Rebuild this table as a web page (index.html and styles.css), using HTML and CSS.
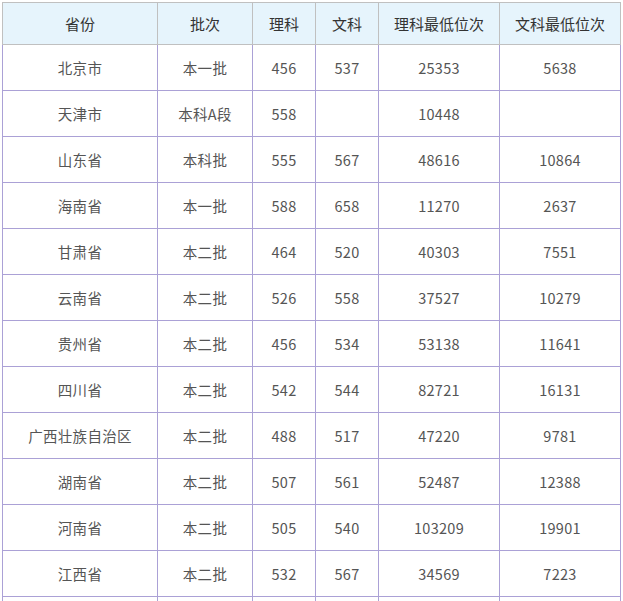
FILE: index.html
```html
<!DOCTYPE html>
<html lang="zh-CN">
<head>
<meta charset="utf-8">
<title>录取分数线</title>
<link rel="stylesheet" href="styles.css">
</head>
<body>
<table class="score-table">
  <colgroup>
    <col class="c-prov"><col class="c-batch"><col class="c-num"><col class="c-num"><col class="c-rank"><col class="c-rank">
  </colgroup>
  <thead>
    <tr><th>省份</th><th>批次</th><th>理科</th><th>文科</th><th>理科最低位次</th><th>文科最低位次</th></tr>
  </thead>
  <tbody>
    <tr><td>北京市</td><td>本一批</td><td>456</td><td>537</td><td>25353</td><td>5638</td></tr>
    <tr><td>天津市</td><td>本科A段</td><td>558</td><td></td><td>10448</td><td></td></tr>
    <tr><td>山东省</td><td>本科批</td><td>555</td><td>567</td><td>48616</td><td>10864</td></tr>
    <tr><td>海南省</td><td>本一批</td><td>588</td><td>658</td><td>11270</td><td>2637</td></tr>
    <tr><td>甘肃省</td><td>本二批</td><td>464</td><td>520</td><td>40303</td><td>7551</td></tr>
    <tr><td>云南省</td><td>本二批</td><td>526</td><td>558</td><td>37527</td><td>10279</td></tr>
    <tr><td>贵州省</td><td>本二批</td><td>456</td><td>534</td><td>53138</td><td>11641</td></tr>
    <tr><td>四川省</td><td>本二批</td><td>542</td><td>544</td><td>82721</td><td>16131</td></tr>
    <tr><td>广西壮族自治区</td><td>本二批</td><td>488</td><td>517</td><td>47220</td><td>9781</td></tr>
    <tr><td>湖南省</td><td>本二批</td><td>507</td><td>561</td><td>52487</td><td>12388</td></tr>
    <tr><td>河南省</td><td>本二批</td><td>505</td><td>540</td><td>103209</td><td>19901</td></tr>
    <tr><td>江西省</td><td>本二批</td><td>532</td><td>567</td><td>34569</td><td>7223</td></tr>
    <tr><td>&nbsp;</td><td></td><td></td><td></td><td></td><td></td></tr>
  </tbody>
</table>
</body>
</html>
```
FILE: styles.css
```css
html, body {
  margin: 0;
  padding: 0;
  background: #ffffff;
}
body {
  padding: 2px 0 0 2px;
  font-family: "Noto Sans CJK SC", "Microsoft YaHei", sans-serif;
}
.score-table {
  border-collapse: separate;
  border-spacing: 0;
  table-layout: fixed;
  width: 619px;
}
.c-prov { width: 156px; }
.c-batch { width: 95px; }
.c-num { width: 63px; }
.c-rank { width: 121px; }

.score-table th,
.score-table td {
  box-sizing: border-box;
  padding: 0;
  text-align: center;
  vertical-align: middle;
  white-space: nowrap;
  overflow: hidden;
}
.score-table th {
  height: 43px;
  background: #e6f4fc;
  color: #333333;
  font-size: 15px;
  font-weight: normal;
  border-top: 1px solid #c0c0c0;
  border-right: 1px solid #c0c0c0;
  border-bottom: 1px solid #c0c0c0;
}
.score-table th:first-child {
  border-left: 1px solid #c0c0c0;
}
.score-table td {
  height: 46px;
  color: #555555;
  font-size: 14.5px;
  letter-spacing: 0.3px;
  border-right: 1px solid #aba1d6;
  border-bottom: 1px solid #aba1d6;
}
.score-table td:first-child {
  border-left: 1px solid #aba1d6;
}
```
